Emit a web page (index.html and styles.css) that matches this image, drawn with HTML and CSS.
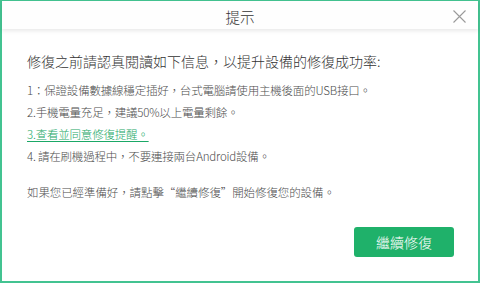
FILE: index.html
```html
<!DOCTYPE html>
<html lang="zh-Hant">
<head>
<meta charset="utf-8">
<title>提示</title>
<link rel="stylesheet" href="styles.css">
</head>
<body>
<div class="window">
  <div class="header">
    <span></span>
    <span class="title">提示</span>
    <button class="close" aria-label="close">
      <svg width="13" height="13" viewBox="0 0 13 13"><path d="M0.5 0.5 L12.5 12.5 M12.5 0.5 L0.5 12.5" stroke="#9a9a9a" stroke-width="1.1" fill="none"/></svg>
    </button>
  </div>
  <div class="content">
    <p class="lead">修復之前請認真閱讀如下信息，以提升設備的修復成功率:</p>
    <ul class="list">
      <li>1：保證設備數據線穩定插好，台式電腦請使用主機後面的USB接口。</li>
      <li>2.手機電量充足，建議50%以上電量剩餘。</li>
      <li><a class="link" href="#">3.查看並同意修復提醒。</a></li>
      <li>4. 請在刷機過程中，不要連接兩台Android設備。</li>
    </ul>
    <p class="note">如果您已經準備好，請點擊“繼續修復”開始修復您的設備。</p>
  </div>
  <div class="footer">
    <button class="primary">繼續修復</button>
  </div>
</div>
</body>
</html>
```
FILE: styles.css
```css
html, body {
  margin: 0;
  padding: 0;
  background: #fff;
}
body {
  font-family: "Noto Sans CJK TC", "Noto Sans", sans-serif;
  font-weight: 300;
  color: #333;
}
.window {
  box-sizing: border-box;
  width: 480px;
  height: 283px;
  border: 2px solid #43c391;
  border-top-width: 1px;
  display: flex;
  flex-direction: column;
  background: #fff;
}
.header {
  height: 28px;
  flex: none;
  display: grid;
  grid-template-columns: 1fr auto 1fr;
  align-items: center;
  background: #fefefe;
  box-shadow: 0 2px 4px rgba(0, 0, 0, 0.09);
  position: relative;
  z-index: 1;
}
.title {
  font-size: 14.5px;
  line-height: 20px;
  padding-top: 3px;
  color: #333;
}
.close {
  justify-self: end;
  margin-right: 12px;
  margin-top: 3px;
  padding: 0;
  border: 0;
  background: none;
  width: 13px;
  height: 13px;
  display: flex;
}
.content {
  padding: 21px 25px 0;
}
.lead {
  margin: 0;
  font-size: 14px;
  line-height: 22px;
  color: #333;
}
.list {
  list-style: none;
  margin: 7px 0 0;
  padding: 0;
  font-size: 11.5px;
  letter-spacing: -0.2px;
  line-height: 22px;
  color: #4d4d4d;
}
.link {
  color: #1aa866;
  text-decoration: underline;
  text-underline-offset: 2px;
}
.note {
  margin: 14px 0 0;
  font-size: 11.5px;
  letter-spacing: -0.1px;
  line-height: 22px;
  color: #4d4d4d;
}
.footer {
  margin-top: auto;
  display: flex;
  justify-content: flex-end;
  padding: 0 24px 24px 0;
}
.primary {
  width: 100px;
  height: 30px;
  border: 0;
  border-radius: 3px;
  background: #1fb16a;
  color: #fff;
  font-family: "Noto Sans CJK TC", sans-serif;
  font-weight: 300;
  font-size: 14px;
  line-height: 30px;
  padding: 0;
}
```
